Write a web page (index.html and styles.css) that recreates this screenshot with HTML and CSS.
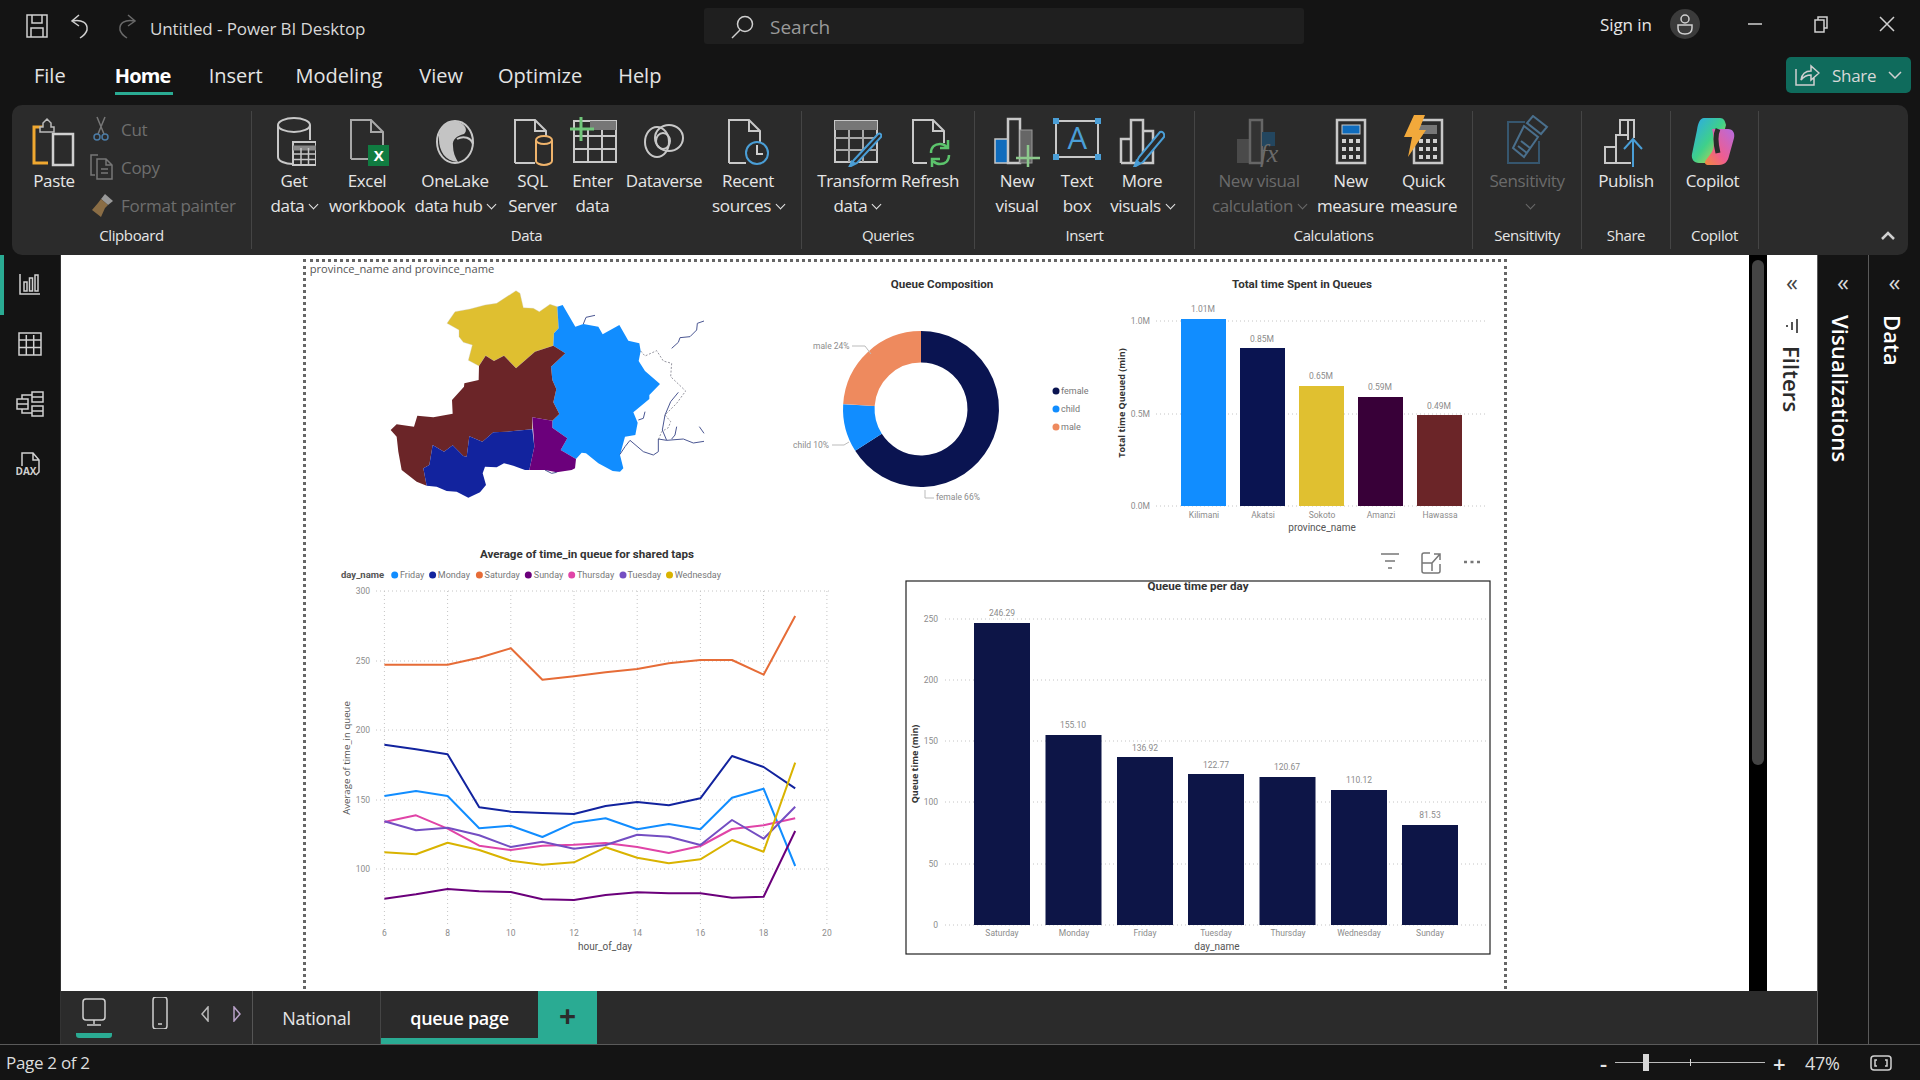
FILE: index.html
```html
<!DOCTYPE html>
<html lang="en">
<head>
  <meta charset="UTF-8">
  <title>Untitled - Power BI Desktop</title>
  <link rel="stylesheet" href="styles.css">
</head>
<body>
  <!-- title bar -->
  <header class="titlebar">
    <svg class="qa-icon" width="22" height="24" viewBox="0 0 22 24"><path d="M1 1h20v22H1z M6 1v8h10V1 M5 23v-9h12v9" class="ln"/></svg>
    <svg class="qa-icon" width="24" height="26" viewBox="0 0 24 26"><path d="M10 2 3 8l7 5 M3 8c10-2 16 2 15 9-1 4-4 6-7 8" class="ln"/></svg>
    <svg class="qa-icon dim" width="24" height="26" viewBox="0 0 24 26"><path d="M14 2l7 6-7 5 M21 8C11 6 5 10 6 17c1 4 4 6 7 8" class="ln"/></svg>
    <span class="doc-title">Untitled - Power BI Desktop</span>
    <div class="search">
      <svg width="24" height="24" viewBox="0 0 24 24"><circle cx="15" cy="9" r="7.5" class="ln"/><path d="M10 15 2 23" class="ln"/></svg>
      <span>Search</span>
    </div>
    <span class="signin">Sign in</span>
    <svg class="avatar" width="30" height="30" viewBox="0 0 30 30"><circle cx="15" cy="15" r="15" fill="#3b3b3b"/><circle cx="15" cy="10" r="4" class="ln"/><path d="M8 16h14v3c0 4-3 6-7 6s-7-2-7-6z" class="ln"/></svg>
    <svg class="win-btn" width="18" height="18" viewBox="0 0 18 18"><path d="M2 9h14" class="ln"/></svg>
    <svg class="win-btn" width="18" height="18" viewBox="0 0 18 18"><path d="M3 5h9v12H3z M6 5V2h9v11h-3" class="ln"/></svg>
    <svg class="win-btn" width="18" height="18" viewBox="0 0 18 18"><path d="M2 2l14 14 M16 2 2 16" class="ln"/></svg>
  </header>

  <!-- menu -->
  <nav class="menubar">
    <a class="tab tab-file">File</a>
    <a class="tab tab-home active">Home</a>
    <a class="tab tab-insert">Insert</a>
    <a class="tab tab-modeling">Modeling</a>
    <a class="tab tab-view">View</a>
    <a class="tab tab-optimize">Optimize</a>
    <a class="tab tab-help">Help</a>
    <button class="share">
      <svg width="26" height="24" viewBox="0 0 26 24"><path d="M2 6v16h18v-7 M7 17c1-7 6-9 10-9V3l8 7-8 7v-5c-4 0-7 1-10 5z" class="ln"/></svg>
      <span>Share</span>
      <svg width="14" height="8" viewBox="0 0 14 8"><path d="M1 1l6 6 6-6" class="ln"/></svg>
    </button>
  </nav>

  <!-- ribbon -->
  <section class="ribbon">
    <div class="group g-clip">
      <div class="buttons">
        <div class="btn b-paste">
          <svg width="44" height="52" viewBox="0 0 44 52"><path d="M16 12H2v36h14" fill="none" stroke="#f0a830" stroke-width="3"/><path d="M8 12h3V8l4-4 4 4v4h3v5H8z" fill="#2b2b2b" stroke="#bbb" stroke-width="1.5"/><rect x="21" y="19" width="20" height="31" fill="#2b2b2b" stroke="#d0d0d0" stroke-width="2.5"/></svg>
          <span>Paste</span>
        </div>
        <div class="small-stack">
          <div class="small"><svg width="24" height="26" viewBox="0 0 24 26"><path d="M7 1l7 17 M15 1 8 18" stroke="#777" fill="none" stroke-width="1.5"/><circle cx="7" cy="21" r="3" fill="none" stroke="#4b7ba5" stroke-width="1.5"/><circle cx="15" cy="21" r="3" fill="none" stroke="#4b7ba5" stroke-width="1.5"/></svg><span>Cut</span></div>
          <div class="small"><svg width="24" height="26" viewBox="0 0 24 26"><path d="M8 1H1v20h4 M7 5h9l6 6v14H7z M16 5v6h6 M11 15h7 M11 19h7" stroke="#777" fill="none" stroke-width="1.5"/></svg><span>Copy</span></div>
          <div class="small"><svg width="24" height="26" viewBox="0 0 24 26"><path d="M15 2l8 7-5 4-7-6z" fill="#999"/><path d="M11 7l7 6-3 3-4 9-9-7 6-7z" fill="#8a6d45"/></svg><span>Format painter</span></div>
        </div>
      </div>
      <div class="group-name">Clipboard</div>
    </div>

    <div class="group g-data">
      <div class="buttons">
        <div class="btn b-get">
          <svg width="44" height="52" viewBox="-3 0 44 52"><path d="M3 10v32c0 4 7 7 15 7M35 10v15" class="ic"/><ellipse cx="19" cy="10" rx="16" ry="7" class="ic"/><rect x="18" y="27" width="23" height="23" fill="#2b2b2b" stroke="#c8c8c8" stroke-width="2"/><path d="M18 33h23" stroke="#888" stroke-width="5"/><path d="M18 39h23 M18 44.500h23 M26 33v17 M33.500 33v17" stroke="#c8c8c8" stroke-width="1.500"/></svg>
          <span>Get<br>data<i class="chev"></i></span>
        </div>
        <div class="btn b-excel">
          <svg width="44" height="52" viewBox="0 0 44 52"><path d="M6 44V5h20l12 12v13 M26 5v12h12 M6 44h17" fill="none" stroke="#a8a8a8" stroke-width="2"/><rect x="23" y="30" width="21" height="21" fill="#107c41"/><text x="33.500" y="46" class="ic-x">X</text></svg>
          <span>Excel<br>workbook</span>
        </div>
        <div class="btn b-lake">
          <svg width="44" height="52" viewBox="0 0 44 52"><ellipse cx="22" cy="27" rx="18" ry="21" class="ic"/><path d="M6 24C5 14 12 5 22 6c9 1 14 9 9 13-7 2-12 5-11 12 0 6 2 11 5 16C12 46 6 36 6 24z" fill="#c4c4c4"/><path d="M24 24c7-4 14-1 16 5" class="ic"/></svg>
          <span>OneLake<br>data hub<i class="chev"></i></span>
        </div>
        <div class="btn b-sql">
          <svg width="44" height="52" viewBox="0 0 44 52"><path d="M4 48V5h20l11 11v9 M24 5v11h11 M4 48h20" class="ic"/><path d="M25 25v21c0 2 4 4 8 4s8-2 8-4V25" fill="#2b2b2b" stroke="#efb36b" stroke-width="2"/><ellipse cx="33" cy="25" rx="8" ry="4" fill="#2b2b2b" stroke="#efb36b" stroke-width="2"/></svg>
          <span>SQL<br>Server</span>
        </div>
        <div class="btn b-enter">
          <svg width="50" height="52" viewBox="0 0 50 52"><rect x="6" y="6" width="42" height="41" fill="none" stroke="#c8c8c8" stroke-width="2"/><rect x="22" y="6" width="26" height="9" fill="#777"/><path d="M6 21h42 M6 34h42 M20 15v32 M34 15v32" stroke="#c8c8c8" stroke-width="2"/><path d="M13 2v24 M2 14h24" stroke="#71c67b" stroke-width="3"/></svg>
          <span>Enter<br>data</span>
        </div>
        <div class="btn b-verse">
          <svg width="44" height="52" viewBox="0 0 44 52"><ellipse cx="15" cy="27" rx="12" ry="15" class="ic"/><ellipse cx="27" cy="23" rx="14" ry="13" class="ic"/><ellipse cx="21" cy="26" rx="7" ry="8" class="ic"/></svg>
          <span>Dataverse</span>
        </div>
        <div class="btn b-recent">
          <svg width="44" height="52" viewBox="0 0 44 52"><path d="M3 48V5h20l11 11v15 M23 5v11h11 M3 48h17" class="ic"/><circle cx="31" cy="38" r="11" fill="#2b2b2b" stroke="#4a9ed6" stroke-width="2"/><path d="M31 30v9h6" fill="none" stroke="#d0d0d0" stroke-width="2"/></svg>
          <span>Recent<br>sources<i class="chev"></i></span>
        </div>
      </div>
      <div class="group-name">Data</div>
    </div>

    <div class="group g-queries">
      <div class="buttons">
        <div class="btn b-transform">
          <svg width="50" height="52" viewBox="0 0 50 52"><rect x="3" y="6" width="42" height="41" fill="none" stroke="#c8c8c8" stroke-width="2"/><rect x="3" y="6" width="42" height="9" fill="#777"/><path d="M3 23h42 M3 35h42 M17 15v32 M31 15v32" stroke="#a8a8a8" stroke-width="2"/><path d="M46 19 22 45l-5 7 8-4 24-26c1-3-1-4-3-3z" fill="#2b2b2b" stroke="#4a9ed6" stroke-width="2"/><path d="M17 52l2-7 5 3z" fill="#4a9ed6"/></svg>
          <span>Transform<br>data<i class="chev"></i></span>
        </div>
        <div class="btn b-refresh">
          <svg width="44" height="52" viewBox="0 0 44 52"><path d="M5 48V5h20l11 11v12 M25 5v11h11 M5 48h14" class="ic"/><path d="M23 38c0-6 4-9 9-9 3 0 5 1 7 3 M41 40c0 6-4 9-9 9-3 0-5-1-7-3" fill="none" stroke="#5cc46c" stroke-width="2.500"/><path d="M40 25v8h-8 M24 52v-8h8" fill="none" stroke="#5cc46c" stroke-width="2.500"/></svg>
          <span>Refresh</span>
        </div>
      </div>
      <div class="group-name">Queries</div>
    </div>

    <div class="group g-insert">
      <div class="buttons">
        <div class="btn b-newvis">
          <svg width="46" height="52" viewBox="0 0 46 52"><rect x="1" y="24" width="13" height="24" fill="#0f6cbd" stroke="#c8c8c8" stroke-width="1.500"/><path d="M14 48V4h12v44z" fill="none" stroke="#c8c8c8" stroke-width="2.500"/><rect x="26" y="15" width="12" height="33" fill="#666" stroke="#999"/><path d="M34 30v24 M22 43h24" stroke="#8cc98c" stroke-width="2.500"/></svg>
          <span>New<br>visual</span>
        </div>
        <div class="btn b-textbox">
          <svg width="48" height="52" viewBox="0 0 48 52"><rect x="3" y="6" width="42" height="36" fill="none" stroke="#c8c8c8" stroke-width="2"/><path d="M0 3h6v6H0z M42 3h6v6h-6z M0 39h6v6H0z M42 39h6v6h-6z" fill="#4a9ed6"/><text x="24" y="34" class="ic-a">A</text></svg>
          <span>Text<br>box</span>
        </div>
        <div class="btn b-more">
          <svg width="46" height="52" viewBox="0 0 46 52"><path d="M2 48V24h10 M12 48V5h12v43 M24 16h10v32H2" fill="none" stroke="#c8c8c8" stroke-width="2.500"/><path d="M41 17 20 42l-5 10 9-5 21-25c1-4-2-6-4-5z" fill="#2b2b2b" stroke="#4a9ed6" stroke-width="2"/><path d="M15 52l2-8 5 4z" fill="#4a9ed6"/></svg>
          <span>More<br>visuals<i class="chev"></i></span>
        </div>
      </div>
      <div class="group-name">Insert</div>
    </div>

    <div class="group g-calc">
      <div class="buttons">
        <div class="btn b-viscalc disabled">
          <svg width="46" height="52" viewBox="0 0 46 52"><rect x="1" y="24" width="13" height="24" fill="#4a4a4a"/><path d="M14 48V5h12v43z" fill="#333" stroke="#666" stroke-width="2.500"/><rect x="26" y="17" width="13" height="14" fill="#23465f"/><text x="33" y="47" class="ic-fx">fx</text></svg>
          <span>New visual<br>calculation<i class="chev"></i></span>
        </div>
        <div class="btn b-measure">
          <svg width="34" height="52" viewBox="0 0 34 52"><rect x="3" y="5" width="28" height="43" fill="none" stroke="#c8c8c8" stroke-width="2.500"/><rect x="8" y="10" width="18" height="9" fill="#0f6cbd" stroke="#c8c8c8"/><path d="M8 24h4v4H8z M15 24h4v4h-4z M22 24h4v4h-4z M8 32h4v4H8z M15 32h4v4h-4z M22 32h4v4h-4z M8 40h4v4H8z M15 40h4v4h-4z M22 40h4v4h-4z" fill="#d0d0d0"/></svg>
          <span>New<br>measure</span>
        </div>
        <div class="btn b-quick">
          <svg width="44" height="52" viewBox="0 0 44 52"><rect x="12" y="5" width="28" height="43" fill="none" stroke="#c8c8c8" stroke-width="2.500"/><rect x="17" y="10" width="18" height="9" fill="#777"/><path d="M17 24h4v4h-4z M24 24h4v4h-4z M31 24h4v4h-4z M17 32h4v4h-4z M24 32h4v4h-4z M31 32h4v4h-4z M17 40h4v4h-4z M24 40h4v4h-4z M31 40h4v4h-4z" fill="#d0d0d0"/><path d="M12 0h11l-6 15h7L6 42l4-20H2z" fill="#f2a93b"/></svg>
          <span>Quick<br>measure</span>
        </div>
      </div>
      <div class="group-name">Calculations</div>
    </div>

    <div class="group g-sens">
      <div class="buttons">
        <div class="btn b-sens disabled">
          <svg width="44" height="52" viewBox="0 0 44 52"><path d="M20 7H3v41h31V26" fill="none" stroke="#36566e" stroke-width="2"/><path d="M28 1l14 11-6 7-14-11z M19 11l14 11-14 20L8 33z" fill="#2b2b2b" stroke="#4a6f8c" stroke-width="2"/><path d="M16 26l9 7 M13 31l9 7" stroke="#4a6f8c" stroke-width="2"/></svg>
          <span>Sensitivity<br><i class="chev"></i></span>
        </div>
      </div>
      <div class="group-name">Sensitivity</div>
    </div>

    <div class="group g-share">
      <div class="buttons">
        <div class="btn b-publish">
          <svg width="46" height="52" viewBox="0 0 46 52"><path d="M2 48V32h11v16z M13 48V20h12V5h-8v15 M2 48h26" fill="none" stroke="#c8c8c8" stroke-width="2"/><path d="M13 20h12v5 M25 5h6v18" fill="none" stroke="#c8c8c8" stroke-width="2"/><path d="M30 52V24 M21 34l9-10 9 10" fill="none" stroke="#4a9ed6" stroke-width="2"/></svg>
          <span>Publish</span>
        </div>
      </div>
      <div class="group-name">Share</div>
    </div>

    <div class="group g-copilot">
      <div class="buttons">
        <div class="btn b-copilot">
          <svg width="46" height="52" viewBox="0 0 46 52">
            <defs>
              <linearGradient id="cp1" x1="0" y1="0" x2="1" y2="1"><stop offset="0" stop-color="#2aa7f0"/><stop offset=".5" stop-color="#3fd08a"/><stop offset="1" stop-color="#f2d43a"/></linearGradient>
              <linearGradient id="cp2" x1="1" y1="0" x2="0" y2="1"><stop offset="0" stop-color="#b56be0"/><stop offset=".6" stop-color="#ef5d8f"/><stop offset="1" stop-color="#f28a3c"/></linearGradient>
            </defs>
            <path d="M14 3h16c4 0 5 3 6 7l-8 30c-1 5-4 8-9 8H9c-5 0-8-4-7-9l5-24c1-7 3-12 7-12z" fill="url(#cp1)"/>
            <path d="M22 14h16c5 0 7 4 6 9l-5 18c-1 5-4 9-10 9H19c-4 0-5-2-3-5l6-8c3-6 2-15 0-23z" fill="url(#cp2)"/>
            <path d="M28 14c-3 6-2 16 0 24" fill="none" stroke="#2b2b2b" stroke-width="5"/>
          </svg>
          <span>Copilot</span>
        </div>
      </div>
      <div class="group-name">Copilot</div>
    </div>

    <svg class="collapse" width="16" height="10" viewBox="0 0 16 10"><path d="M2 8l6-6 6 6" class="ln thick"/></svg>
  </section>

  <!-- workspace -->
  <main class="workspace">
    <aside class="rail">
      <div class="rail-item active">
        <svg width="22" height="22" viewBox="0 0 22 22"><path d="M1 1v20h20 M5 9h3v9H5z M10.500 5h3v13h-3z M16 2h3v16h-3z" class="ln"/></svg>
      </div>
      <div class="rail-item">
        <svg width="24" height="24" viewBox="0 0 24 24"><path d="M1 1h22v22H1z M1 8h22 M1 15.500h22 M8.300 3v20 M15.700 3v20" class="ln"/></svg>
      </div>
      <div class="rail-item">
        <svg width="28" height="28" viewBox="0 0 28 28"><path d="M16 2h11v5H16z M16 7h11v5H16z M1 9h11v5H1z M1 14h11v5H1z M16 16h11v5H16z M16 21h11v5H16z M6 9V5h10 M6 19v4h10" class="ln"/></svg>
      </div>
      <div class="rail-item">
        <svg width="28" height="26" viewBox="0 0 28 26"><path d="M6 15V2h11l6 7v12l-3 3 M17 2v7h6" class="ln"/><text x="10" y="24" class="ic-dax">DAX</text></svg>
      </div>
    </aside>

    <div class="center">
      <div class="canvas-row">
        <div class="canvas">
          <div class="page-frame"></div>

          <svg class="visual v-map" viewBox="0 0 1500 810">
            <path d="M441 205 465 170 510 162 555 150 590 145 648 107 660 115 670 158 700 160 718 170 750 148 772 155 776 220 762 235 760 272 705 290 648 340 612 302 582 318 557 302 537 333 505 316 517 270 490 262 477 245 477 225z" fill="#dfbf30" stroke="#ccc"/>
            <path d="M772 155 788 150 826 215 850 207 895 215 908 238 958 210 985 257 1018 265 1022 288 1016 318 1035 348 1080 387 1048 420 1048 432 1000 472 1013 503 1006 540 975 545 960 600 970 640 960 650 938 648 895 625 858 595 845 593 828 612 782 585 802 550 757 518 757 497 778 477 760 442 769 402 757 375 753 335 796 295 760 272 762 235 776 220z" fill="#118dff"/>
            <path d="M537 333 557 302 582 318 612 302 648 340 705 290 760 272 796 295 753 335 757 375 769 402 760 442 778 477 757 497 697 487 697 523 622 530 580 532 547 560 508 544 500 605 490 603 458 571 432 590 398 570 388 630 370 640 380 692 350 680 305 645 295 590 290 545 272 525 290 508 342 515 352 482 400 487 458 476 456 435 492 395 493 385 536 375z" fill="#6b2528"/>
            <path d="M398 570 432 590 458 571 490 603 500 605 508 544 547 560 580 532 622 530 697 523 703 575 688 645 675 645 640 632 612 625 590 637 555 635 548 655 558 690 540 712 505 728 470 710 440 708 410 695 380 692 370 640 388 630z" fill="#12239e"/>
            <path d="M697 487 757 497 757 518 802 550 782 585 828 612 825 640 815 645 770 652 735 645 688 645 703 575z" fill="#6b007b"/>
            <g class="river">
              <path d="M850 207 858 187 885 181"/>
              <path d="M1115 280 1135 262 1140 248 1170 245 1190 225 1192 205 1212 198"/>
              <path d="M1135 412 1112 440 1095 480 1087 525 1100 556 1150 552 1180 564 1212 559"/>
              <path d="M1100 556 1075 552 1075 590 1060 600 1030 590 990 556 975 575 960 598"/>
              <path d="M1115 552 1125 540 1130 515 M1198 515 1212 535"/>
              <path d="M735 645 755 655 770 652"/>
              <path d="M1015 495 1030 490 1035 470"/>
            </g>
            <path class="river dashed" d="M1022 288 1035 303 1070 287 1090 318 1115 325 1112 365 1157 408 1130 445 1095 480 1112 500 1105 518 1085 530 1075 555"/>
            <text x="29" y="55" class="map-title">province_name and province_name</text>
          </svg>

          <svg class="visual v-donut" viewBox="780 265 320 260">
            <text x="942" y="288" class="vt-title">Queue Composition</text>
            <path d="M921 346.800A62.200 62.200 0 1 1 868.500 442.300" class="slice" stroke="#0a1451"/>
            <path d="M868.500 442.300A62.200 62.200 0 0 1 858.900 405.100" class="slice" stroke="#118dff"/>
            <path d="M858.900 405.100A62.200 62.200 0 0 1 921 346.800" class="slice" stroke="#ee8a5e"/>
            <path d="M852 346h13l6 8 M832 445h12l5-3 M925 490v8h9" class="leader"/>
            <text x="813" y="349" class="vt-small">male 24%</text>
            <text x="793" y="448" class="vt-small">child 10%</text>
            <text x="936" y="500" class="vt-small">female 66%</text>
            <circle cx="1056" cy="391" r="3.500" fill="#0a1451"/><text x="1061" y="394" class="vt-legend">female</text>
            <circle cx="1056" cy="409" r="3.500" fill="#118dff"/><text x="1061" y="412" class="vt-legend">child</text>
            <circle cx="1056" cy="427" r="3.500" fill="#ee8a5e"/><text x="1061" y="430" class="vt-legend">male</text>
          </svg>

          <svg class="visual v-total" viewBox="1100 265 400 280">
            <text x="1302" y="288" class="vt-title">Total time Spent in Queues</text>
            <path d="M1156 321h331 M1156 414h331 M1156 506h331" class="grid"/>
            <text x="1150" y="324" class="vt-axis end">1.0M</text>
            <text x="1150" y="417" class="vt-axis end">0.5M</text>
            <text x="1150" y="509" class="vt-axis end">0.0M</text>
            <text transform="translate(1125 403) rotate(-90)" class="vt-ytitle">Total time Queued (min)</text>
            <rect x="1181" y="319" width="45" height="187" fill="#118dff"/>
            <rect x="1240" y="348" width="45" height="158" fill="#0a1451"/>
            <rect x="1299" y="386" width="45" height="120" fill="#e0c030"/>
            <rect x="1358" y="397" width="45" height="109" fill="#380038"/>
            <rect x="1417" y="415" width="45" height="91" fill="#6b2528"/>
            <text x="1203" y="312" class="vt-axis mid">1.01M</text>
            <text x="1262" y="342" class="vt-axis mid">0.85M</text>
            <text x="1321" y="379" class="vt-axis mid">0.65M</text>
            <text x="1380" y="390" class="vt-axis mid">0.59M</text>
            <text x="1439" y="409" class="vt-axis mid">0.49M</text>
            <text x="1204" y="518" class="vt-axis mid">Kilimani</text>
            <text x="1263" y="518" class="vt-axis mid">Akatsi</text>
            <text x="1322" y="518" class="vt-axis mid">Sokoto</text>
            <text x="1381" y="518" class="vt-axis mid">Amanzi</text>
            <text x="1440" y="518" class="vt-axis mid">Hawassa</text>
            <text x="1322" y="531" class="vt-xtitle">province_name</text>
          </svg>

          <svg class="visual v-line" viewBox="320 540 540 420">
            <text x="587" y="558" class="vt-title">Average of time_in queue for shared taps</text>
            <text x="341" y="578" class="vt-legend strong">day_name</text>
            <circle cx="394.700" cy="575" r="3.500" fill="#118dff"/><text x="400" y="578" class="vt-legend">Friday</text>
            <circle cx="432.600" cy="575" r="3.500" fill="#12239e"/><text x="437.800" y="578" class="vt-legend">Monday</text>
            <circle cx="479.400" cy="575" r="3.500" fill="#e66c37"/><text x="484.600" y="578" class="vt-legend">Saturday</text>
            <circle cx="528.300" cy="575" r="3.500" fill="#6b007b"/><text x="533.800" y="578" class="vt-legend">Sunday</text>
            <circle cx="571.700" cy="575" r="3.500" fill="#e044a7"/><text x="577" y="578" class="vt-legend">Thursday</text>
            <circle cx="623" cy="575" r="3.500" fill="#744ec2"/><text x="627.500" y="578" class="vt-legend">Tuesday</text>
            <circle cx="669.500" cy="575" r="3.500" fill="#d9b300"/><text x="674.700" y="578" class="vt-legend">Wednesday</text>
            <path d="M376 591h455 M376 661h455 M376 730h455 M376 800h455 M376 869h455 M384.400 591v334 M447.600 591v334 M510.800 591v334 M574 591v334 M637.200 591v334 M700.400 591v334 M763.600 591v334 M826.900 591v334" class="grid"/>
            <text x="370" y="594" class="vt-axis end">300</text>
            <text x="370" y="664" class="vt-axis end">250</text>
            <text x="370" y="733" class="vt-axis end">200</text>
            <text x="370" y="803" class="vt-axis end">150</text>
            <text x="370" y="872" class="vt-axis end">100</text>
            <text x="384.400" y="936" class="vt-axis mid">6</text>
            <text x="447.600" y="936" class="vt-axis mid">8</text>
            <text x="510.800" y="936" class="vt-axis mid">10</text>
            <text x="574" y="936" class="vt-axis mid">12</text>
            <text x="637.200" y="936" class="vt-axis mid">14</text>
            <text x="700.400" y="936" class="vt-axis mid">16</text>
            <text x="763.600" y="936" class="vt-axis mid">18</text>
            <text x="826.900" y="936" class="vt-axis mid">20</text>
            <text transform="translate(350 758) rotate(-90)" class="vt-ytitle light">Average of time_in queue</text>
            <text x="605" y="950" class="vt-xtitle">hour_of_day</text>
            <polyline class="series" stroke="#e66c37" points="384.400,664.700 416,664.700 447.600,664.700 479.200,657.700 510.800,648.300 542.400,679.700 574,676.300 605.600,672.300 637.200,669 668.800,663.300 700.400,660 732,660 763.600,674.700 795.200,616"/>
            <polyline class="series" stroke="#12239e" points="384.400,744.700 416,749.300 447.600,754.300 479.200,807.300 510.800,811.700 542.400,813 574,814 605.600,806 637.200,802 668.800,805.300 700.400,798.300 732,756 763.600,767 795.200,788.300"/>
            <polyline class="series" stroke="#118dff" points="384.400,796 416,791 447.600,796 479.200,828.300 510.800,825.700 542.400,837 574,822.700 605.600,818.300 637.200,829.300 668.800,824 700.400,829.300 732,797.700 763.600,788.700 795.200,866"/>
            <polyline class="series" stroke="#e044a7" points="384.400,822 416,815.300 447.600,828.700 479.200,845.700 510.800,850 542.400,845.700 574,844.700 605.600,843 637.200,847 668.800,853 700.400,846 732,829 763.600,825.300 795.200,818.300"/>
            <polyline class="series" stroke="#744ec2" points="384.400,821.300 416,830.300 447.600,827.700 479.200,835.300 510.800,847 542.400,841.700 574,848.700 605.600,845 637.200,834.700 668.800,836.700 700.400,845 732,820 763.600,838.700 795.200,806.700"/>
            <polyline class="series" stroke="#d9b300" points="384.400,852.300 416,854.300 447.600,842.700 479.200,850 510.800,860.700 542.400,864.700 574,862.300 605.600,847.300 637.200,857.700 668.800,863.300 700.400,859.300 732,840 763.600,851.700 795.200,762.700"/>
            <polyline class="series" stroke="#6b007b" points="384.400,898.700 416,894.300 447.600,889 479.200,891.300 510.800,892 542.400,899.300 574,900 605.600,895 637.200,892.300 668.800,893.300 700.400,893.300 732,897.700 763.600,896.700 795.200,831"/>
          </svg>

          <svg class="visual v-day" viewBox="890 540 620 420">
            <path d="M1381 554h18 M1385 561h10 M1388 568h4" class="hdr-ic"/>
            <path d="M1422 563v-8a2 2 0 0 1 2-2h6 M1422 563h10v8 M1422 563v8a2 2 0 0 0 2 2h14a2 2 0 0 0 2-2v-7 M1432 563l8-9 M1434 554h6v6" class="hdr-ic"/>
            <path d="M1464 562h3 M1470.500 562h3 M1477 562h3" class="hdr-dots"/>
            <rect x="906" y="581" width="584" height="373" class="day-border"/>
            <text x="1198" y="590" class="vt-title">Queue time per day</text>
            <path d="M945 619h541 M945 680h541 M945 741h541 M945 802h541 M945 864h541 M945 925h541" class="grid"/>
            <text x="938" y="622" class="vt-axis end">250</text>
            <text x="938" y="683" class="vt-axis end">200</text>
            <text x="938" y="744" class="vt-axis end">150</text>
            <text x="938" y="805" class="vt-axis end">100</text>
            <text x="938" y="867" class="vt-axis end">50</text>
            <text x="938" y="928" class="vt-axis end">0</text>
            <text transform="translate(918 764) rotate(-90)" class="vt-ytitle">Queue time (min)</text>
            <rect x="974" y="623" width="56" height="302" class="day-bar"/>
            <rect x="1045.500" y="735" width="56" height="190" class="day-bar"/>
            <rect x="1117" y="757" width="56" height="168" class="day-bar"/>
            <rect x="1188" y="774" width="56" height="151" class="day-bar"/>
            <rect x="1259.500" y="777" width="56" height="148" class="day-bar"/>
            <rect x="1331" y="790" width="56" height="135" class="day-bar"/>
            <rect x="1402" y="825" width="56" height="100" class="day-bar"/>
            <text x="1002" y="616" class="vt-axis mid">246.29</text>
            <text x="1073" y="728" class="vt-axis mid">155.10</text>
            <text x="1145" y="751" class="vt-axis mid">136.92</text>
            <text x="1216" y="768" class="vt-axis mid">122.77</text>
            <text x="1287" y="770" class="vt-axis mid">120.67</text>
            <text x="1359" y="783" class="vt-axis mid">110.12</text>
            <text x="1430" y="818" class="vt-axis mid">81.53</text>
            <text x="1002" y="936" class="vt-axis mid">Saturday</text>
            <text x="1074" y="936" class="vt-axis mid">Monday</text>
            <text x="1145" y="936" class="vt-axis mid">Friday</text>
            <text x="1216" y="936" class="vt-axis mid">Tuesday</text>
            <text x="1288" y="936" class="vt-axis mid">Thursday</text>
            <text x="1359" y="936" class="vt-axis mid">Wednesday</text>
            <text x="1430" y="936" class="vt-axis mid">Sunday</text>
            <text x="1217" y="950" class="vt-xtitle">day_name</text>
          </svg>
        </div>

        <div class="scroll"><div class="thumb"></div></div>

        <div class="filters">
          <span class="pane-chev dark">«</span>
          <svg class="filter-ic" width="14" height="14" viewBox="0 0 14 14"><path d="M12 0v14 M7 3v8 M2 6v2" stroke="#555" stroke-width="2" fill="none"/></svg>
          <span class="pane-label filters-label">Filters</span>
        </div>
      </div>

      <div class="pagebar">
        <div class="view-btns">
          <div class="view-btn active">
            <svg width="24" height="32" viewBox="0 0 24 32"><rect x="1" y="2" width="22" height="21" rx="3" class="ln"/><path d="M12 23v4 M5 28h14" class="ln"/></svg>
          </div>
          <div class="view-btn">
            <svg width="18" height="32" viewBox="0 0 18 32"><rect x="2" y="0" width="14" height="32" rx="3" class="ln"/><path d="M7 27h4" class="ln"/></svg>
          </div>
          <div class="pager">
            <svg width="8" height="16" viewBox="0 0 8 16"><path d="M7 1 1 8l6 7z" fill="none" stroke="#bbb" stroke-width="1.500"/></svg>
            <svg width="8" height="16" viewBox="0 0 8 16"><path d="M1 1l6 7-6 7z" fill="none" stroke="#b9a2c9" stroke-width="1.500"/></svg>
          </div>
        </div>
        <div class="page-tab">National</div>
        <div class="page-tab current">queue page</div>
        <div class="add-page">+</div>
      </div>
    </div>

    <aside class="pane p-vis">
      <span class="pane-chev">«</span>
      <span class="pane-label">Visualizations</span>
    </aside>
    <aside class="pane p-data">
      <span class="pane-chev">«</span>
      <span class="pane-label">Data</span>
    </aside>
  </main>

  <!-- status bar -->
  <footer class="statusbar">
    <span class="page-count">Page 2 of 2</span>
    <div class="zoom">
      <span class="zoom-sign minus">-</span>
      <div class="slider"><div class="knob"></div><div class="tick"></div></div>
      <span class="zoom-sign">+</span>
      <span class="zoom-pct">47%</span>
      <svg width="22" height="16" viewBox="0 0 22 16"><rect x="1" y="1" width="20" height="14" rx="3" class="ln"/><path d="M7 5H5v6h2 M15 5h2v6h-2" class="ln"/></svg>
    </div>
  </footer>
</body>
</html>
```

FILE: styles.css
```css
* {
  box-sizing: border-box;
}
body {
  margin: 0;
  width: 1920px;
  height: 1080px;
  overflow: hidden;
  background: #141414;
  color: #e6e6e6;
  font-family: "Open Sans", "Noto Sans", sans-serif;
  display: flex;
  flex-direction: column;
}
svg {
  display: block;
  flex: none;
}
.ln {
  fill: none;
  stroke: #d0d0d0;
  stroke-width: 1.5;
}
.ln.thick {
  stroke-width: 2.5;
}
.ic {
  fill: none;
  stroke: #c8c8c8;
  stroke-width: 2;
}

/* title bar */
.titlebar {
  height: 52px;
  flex: none;
  display: flex;
  align-items: center;
  padding: 0 23px 0 26px;
}
.qa-icon {
  margin-right: 21px;
}
.qa-icon.dim {
  opacity: .45;
  margin-right: 12px;
}
.doc-title {
  width: 554px;
  font-size: 17px;
  letter-spacing: -.1px;
  color: #d8d8d8;
  padding-top: 5px;
}
.search {
  width: 600px;
  height: 36px;
  margin-top: 0;
  background: #1f1f1f;
  border-radius: 3px;
  display: flex;
  align-items: center;
  gap: 16px;
  padding: 2px 0 0 26px;
  color: #9a9a9a;
  font-size: 19px;
}
.signin {
  margin-left: 296px;
  font-size: 17px;
  letter-spacing: -.1px;
  margin-top: -4px;
}
.avatar {
  margin: -4px 46px 0 18px;
}
.win-btn {
  margin: -4px 48px 0 0;
}
.win-btn:last-child {
  margin-right: 0;
}

/* menu */
.menubar {
  height: 53px;
  flex: none;
  position: relative;
  display: flex;
  align-items: flex-start;
}
.tab {
  font-size: 20px;
  line-height: 26px;
  padding-top: 11px;
  height: 43px;
  color: #e4e4e4;
}
.tab-file { margin-left: 34px; }
.tab-home { margin-left: 49px; width: 58px; }
.tab-insert { margin-left: 36px; }
.tab-modeling { margin-left: 33px; }
.tab-view { margin-left: 37px; }
.tab-optimize { margin-left: 35px; }
.tab-help { margin-left: 36px; }
.tab.active {
  font-weight: 700;
  color: #fff;
  border-bottom: 3px solid #2aab93;
  letter-spacing: -.8px;
}
.share {
  margin-left: auto;
  margin-right: 9px;
  margin-top: 5px;
  width: 125px;
  height: 36px;
  background: #0f6b5c;
  border: none;
  border-radius: 5px;
  color: #d8d8d8;
  font: 17px "Open Sans", sans-serif;
  letter-spacing: -.3px;
  display: flex;
  align-items: center;
  gap: 12px;
  padding: 0 8px;
}

/* ribbon */
.ribbon {
  height: 150px;
  flex: none;
  margin: 0 12px;
  width: 1896px;
  background: #2b2b2b;
  border-radius: 10px;
  display: flex;
  padding-top: 6px;
  position: relative;
  z-index: 2;
}
.group {
  height: 138px;
  display: flex;
  flex-direction: column;
  border-right: 1px solid #454545;
}
.g-clip { width: 240px; }
.g-data { width: 550px; }
.g-queries { width: 173px; }
.g-insert { width: 220px; }
.g-calc { width: 278px; }
.g-sens { width: 109px; }
.g-share { width: 89px; }
.g-copilot { width: 88px; }
.buttons {
  height: 113px;
  flex: none;
  display: flex;
  padding-top: 4px;
}
.g-data .buttons { padding-left: 10px; }
.g-queries .buttons { padding-left: 12px; }
.g-insert .buttons { padding-left: 12px; }
.g-calc .buttons { padding-left: 4px; }
.btn {
  display: flex;
  flex-direction: column;
  align-items: center;
  font-size: 17px;
  line-height: 24.5px;
  letter-spacing: -.38px;
  text-align: center;
  white-space: nowrap;
  color: #e6e6e6;
}
.btn svg {
  margin-bottom: 2px;
  height: 52px;
}
.btn.disabled {
  color: #6a6a6a;
}
.b-paste { width: 84px; }
.b-get { width: 64px; }
.b-excel { width: 82px; }
.b-lake { width: 94px; }
.b-sql { width: 61px; }
.b-enter { width: 59px; }
.b-verse { width: 84px; }
.b-recent { width: 84px; }
.b-transform { width: 86px; }
.b-refresh { width: 60px; }
.b-newvis { width: 60px; }
.b-textbox { width: 60px; }
.b-more { width: 70px; }
.b-viscalc { width: 120px; }
.b-measure { width: 63px; }
.b-quick { width: 83px; }
.b-sens { width: 108px; }
.b-publish { width: 88px; }
.b-copilot { width: 83px; }
.chev {
  display: inline-block;
  width: 7px;
  height: 7px;
  border-right: 1.5px solid currentColor;
  border-bottom: 1.5px solid currentColor;
  transform: rotate(45deg);
  margin: 0 0 4px 6px;
}
.small-stack {
  margin: -5px 0 0 -6px;
  display: flex;
  flex-direction: column;
  color: #6e6e6e;
  font-size: 17px;
  letter-spacing: -.3px;
}
.small {
  height: 39.5px;
  display: flex;
  align-items: center;
  gap: 7px;
  white-space: nowrap;
}
.group-name {
  text-align: center;
  font-size: 15px;
  letter-spacing: -.4px;
  line-height: 22px;
  height: 25px;
  color: #e6e6e6;
}
.collapse {
  position: absolute;
  right: 12px;
  top: 126px;
}

.ic-x {
  font: 700 15px "Open Sans", sans-serif;
  fill: #fff;
  text-anchor: middle;
}
.ic-a {
  font: 400 31px "Open Sans", sans-serif;
  fill: #4a9ed6;
  text-anchor: middle;
}
.ic-fx {
  font: italic 26px "Liberation Serif", serif;
  fill: #6a6a6a;
  text-anchor: middle;
}
.ic-dax {
  font: 700 10px "Open Sans", sans-serif;
  fill: #d0d0d0;
  text-anchor: middle;
}

/* workspace */
.workspace {
  height: 789px;
  flex: none;
  display: flex;
}
.rail {
  width: 61px;
  flex: none;
  border-right: 1px solid #333;
  display: flex;
  flex-direction: column;
}
.rail-item {
  height: 60px;
  display: flex;
  align-items: center;
  justify-content: center;
  padding: 0 1px 2px 0;
}
.rail-item.active {
  border-left: 4px solid #2aab93;
  padding-right: 5px;
}
.center {
  width: 1756px;
  flex: none;
  display: flex;
  flex-direction: column;
}
.canvas-row {
  height: 736px;
  flex: none;
  display: flex;
}
.canvas {
  width: 1688px;
  flex: none;
  background: #fff;
  position: relative;
  overflow: hidden;
}
.page-frame {
  position: absolute;
  left: 242px;
  top: 4px;
  width: 1204px;
  height: 760px;
  border: 3px dotted #666;
}
.visual {
  position: absolute;
}
.v-map { left: 239px; top: 0; width: 500px; height: 270px; }
.v-donut { left: 719px; top: 10px; width: 320px; height: 260px; }
.v-total { left: 1039px; top: 10px; width: 400px; height: 280px; }
.v-line { left: 259px; top: 285px; width: 540px; height: 420px; }
.v-day { left: 829px; top: 285px; width: 620px; height: 420px; }

.map-title {
  font: 33.5px "Open Sans", sans-serif;
  fill: #555;
}
.river {
  fill: none;
  stroke: #2c3a80;
  stroke-width: 3;
  opacity: .85;
}
.river.dashed {
  stroke: #556;
  stroke-width: 2.5;
  stroke-dasharray: 6 5;
  opacity: .75;
}
.slice {
  fill: none;
  stroke-width: 31.5;
}
.leader {
  fill: none;
  stroke: #bbb;
}
.grid {
  fill: none;
  stroke: #c4c4c4;
  stroke-dasharray: 1 3;
}
.series {
  fill: none;
  stroke-width: 2;
  stroke-linejoin: round;
}
.vt-title {
  font: 700 11.6px Roboto, sans-serif;
  fill: #333;
  text-anchor: middle;
}
.vt-small,
.vt-axis {
  font: 8.5px Roboto, sans-serif;
  fill: #8c8c8c;
}
.vt-legend {
  font: 9px Roboto, sans-serif;
  fill: #777;
}
.vt-legend.strong {
  font-weight: 700;
  font-size: 9.5px;
  fill: #555;
}
.end { text-anchor: end; }
.mid { text-anchor: middle; }
.vt-ytitle {
  font: 700 9px "Open Sans", sans-serif;
  fill: #333;
  text-anchor: middle;
}
.vt-ytitle.light {
  font-weight: 400;
  font-size: 9.6px;
  fill: #555;
}
.vt-xtitle {
  font: 10px Roboto, sans-serif;
  fill: #555;
  text-anchor: middle;
}
.hdr-ic {
  fill: none;
  stroke: #777;
  stroke-width: 1.5;
}
.hdr-dots {
  stroke: #777;
  stroke-width: 2.5;
}
.day-border {
  fill: #fff;
  fill-opacity: 0;
  stroke: #222;
  stroke-width: 1.2;
}
.day-bar {
  fill: #0d1547;
}

.scroll {
  width: 18px;
  flex: none;
  background: #000;
  padding: 5px 3px 0;
}
.thumb {
  height: 505px;
  background: #444;
  border-radius: 6px;
}
.filters {
  width: 50px;
  flex: none;
  background: #fff;
  color: #2b2b2b;
  display: flex;
  flex-direction: column;
  align-items: center;
}
.pane-chev {
  font-size: 24px;
  line-height: 24px;
  margin-top: 15px;
  color: #d8d8d8;
}
.pane-chev.dark {
  color: #444;
}
.filter-ic {
  margin-top: 25px;
}
.pane-label {
  writing-mode: vertical-rl;
  font-size: 22px;
  font-weight: 600;
  letter-spacing: .1px;
  color: #fff;
  margin: 21px 4px 0 0;
}
.filters-label {
  color: #2b2b2b;
  margin: 13px 1px 0 0;
}
.pagebar {
  height: 53px;
  flex: none;
  background: #2b2b2b;
  display: flex;
}
.view-btns {
  width: 192px;
  display: flex;
  border-right: 1px solid #555;
  padding: 9px 0 0 15px;
}
.view-btn {
  width: 36px;
  height: 38px;
  display: flex;
  justify-content: center;
  margin-right: 38px;
}
.view-btn svg {
  margin-top: -3px;
}
.view-btn.active {
  border-bottom: 5px solid #2aab93;
  border-radius: 0 0 3px 3px;
}
.view-btn:nth-child(2) {
  width: 20px;
  margin-right: 31px;
}
.pager {
  display: flex;
  gap: 24px;
  padding-top: 6px;
}
.page-tab {
  width: 128px;
  display: flex;
  align-items: center;
  justify-content: center;
  font-size: 18px;
  letter-spacing: -.3px;
  color: #e6e6e6;
  border-right: 1px solid #454545;
}
.page-tab.current {
  width: 157px;
  font-weight: 600;
  color: #fff;
  border-right: none;
  border-bottom: 6px solid #2aab93;
  padding-top: 6px;
}
.add-page {
  width: 59px;
  background: #2aab93;
  color: #2b2b2b;
  font-size: 30px;
  font-weight: 700;
  display: flex;
  align-items: center;
  justify-content: center;
  line-height: 1;
  padding-bottom: 4px;
}
.pane {
  flex: none;
  border-left: 1px solid #5a5a5a;
  display: flex;
  flex-direction: column;
  align-items: center;
  background: #141414;
}
.p-vis { width: 51px; }
.p-data { width: 52px; }

/* status bar */
.statusbar {
  height: 36px;
  flex: none;
  border-top: 1px solid #5a5a5a;
  display: flex;
  align-items: center;
  justify-content: space-between;
  padding: 0 28px 0 6px;
  color: #ddd;
  font-size: 17px;
  letter-spacing: -.3px;
}
.zoom {
  display: flex;
  align-items: center;
}
.zoom-sign {
  font-size: 22px;
  line-height: 22px;
  font-weight: 600;
  color: #e6e6e6;
  width: 11px;
  text-align: center;
}
.zoom-sign.minus {
  margin-right: 6px;
}
.slider {
  width: 150px;
  height: 1px;
  background: #bbb;
  position: relative;
  margin-right: 8px;
}
.knob {
  position: absolute;
  left: 28px;
  top: -8px;
  width: 6px;
  height: 17px;
  background: #d8d8d8;
}
.tick {
  position: absolute;
  left: 75px;
  top: -3px;
  width: 1px;
  height: 7px;
  background: #d8d8d8;
}
.zoom-pct {
  font-size: 18px;
  margin: 0 30px 0 21px;
  width: 35px;
}
```
